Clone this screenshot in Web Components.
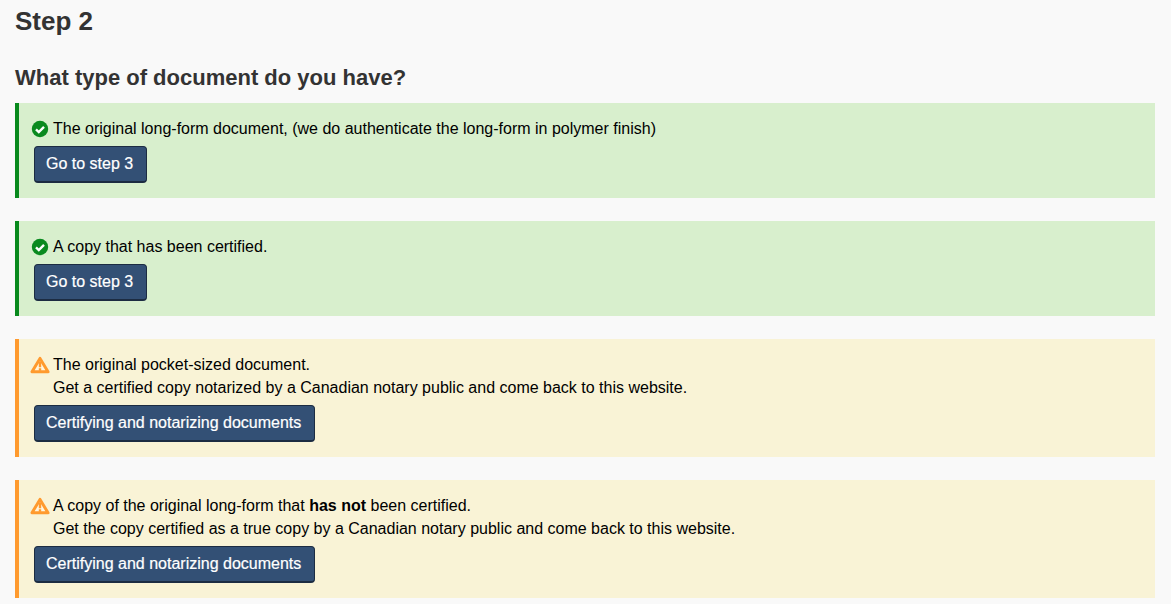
<!DOCTYPE html>
<html><head><meta charset="utf-8"><style>
html,body{margin:0;padding:0;background:#f9f9f9;color:#333;font-family:"Liberation Sans",Arial,sans-serif;font-size:16px}
body{overflow:hidden;height:604px}
</style></head><body>
<step-page>
<h-title slot="title">Step 2</h-title>
<h-sub slot="sub">What type of document do you have?</h-sub>
<note-box kind="ok"><span>The original long-form document, (we do authenticate the long-form in polymer finish)</span><doc-button slot="action">Go to step 3</doc-button></note-box>
<note-box kind="ok"><span>A copy that has been certified.</span><doc-button slot="action">Go to step 3</doc-button></note-box>
<note-box kind="warn"><span>The original pocket-sized document.</span><span slot="more">Get a certified copy notarized by a Canadian notary public and come back to this website.</span><doc-button slot="action">Certifying and notarizing documents</doc-button></note-box>
<note-box kind="warn"><span>A copy of the original long-form that <b>has not</b> been certified.</span><span slot="more">Get the copy certified as a true copy by a Canadian notary public and come back to this website.</span><doc-button slot="action">Certifying and notarizing documents</doc-button></note-box>
</step-page>
<script>
function def(name,html){customElements.define(name,class extends HTMLElement{constructor(){super();this.attachShadow({mode:'open'}).innerHTML=html;}});}
def('step-page',`<style>:host{display:block;padding:0 16px 0 15px}
.c{display:flex;flex-direction:column;gap:23px}</style>
<slot name="title"></slot><slot name="sub"></slot><div class="c"><slot></slot></div>`);
def('h-title',`<style>:host{display:block;font-size:26px;font-weight:700;line-height:30px;padding-top:6px;margin-bottom:29px;color:#333}</style><slot></slot>`);
def('h-sub',`<style>:host{display:block;font-size:22px;font-weight:700;line-height:26px;margin-bottom:12px;color:#333}</style><slot></slot>`);
def('doc-button',`<style>:host{display:inline-block;box-sizing:border-box;height:37px;line-height:34px;padding:0 13px 0 11px;background:#335075;color:#fff;border:1px solid #1c2c42;border-bottom-width:2px;border-radius:4px;font-size:16px;-webkit-text-stroke:.2px #fff}</style><slot></slot>`);
const ICONS={ok:`<svg width="18" height="18" viewBox="0 0 18 18"><circle cx="9" cy="9" r="8.2" fill="#0a8a1f"/><path d="M5 9.4l2.8 2.7L13 6.9" fill="none" stroke="#fff" stroke-width="2.4"/></svg>`,
warn:`<svg width="20" height="18" viewBox="0 0 20 18"><path d="M10 2.4L18 15.8H2Z" fill="#fff6e0" stroke="#ff9a2e" stroke-width="3" stroke-linejoin="round"/><path d="M10 6v5.2M10 12.2v2.6" stroke="#ff9a2e" stroke-width="2.4"/></svg>`};
customElements.define('note-box',class extends HTMLElement{constructor(){super();const k=this.getAttribute('kind');
this.attachShadow({mode:'open'}).innerHTML=`<style>
:host{display:block;border-left:4px solid ${k==='ok'?'#088a1d':'#ff9a2e'};background:${k==='ok'?'#d8efcd':'#f9f3d6'};color:#000;padding:14px 0 15px 15px;line-height:23px}
.l{position:relative;padding-left:19px;min-height:23px}
.i{position:absolute;left:${k==='ok'?'-3':'-4'}px;top:3px;display:flex}
.m{padding-left:19px}
.a{padding-top:6px}
</style><div class="l"><span class="i">${ICONS[k]}</span><slot></slot></div><div class="m"><slot name="more"></slot></div><div class="a"><slot name="action"></slot></div>`;}});
</script>
</body></html>
